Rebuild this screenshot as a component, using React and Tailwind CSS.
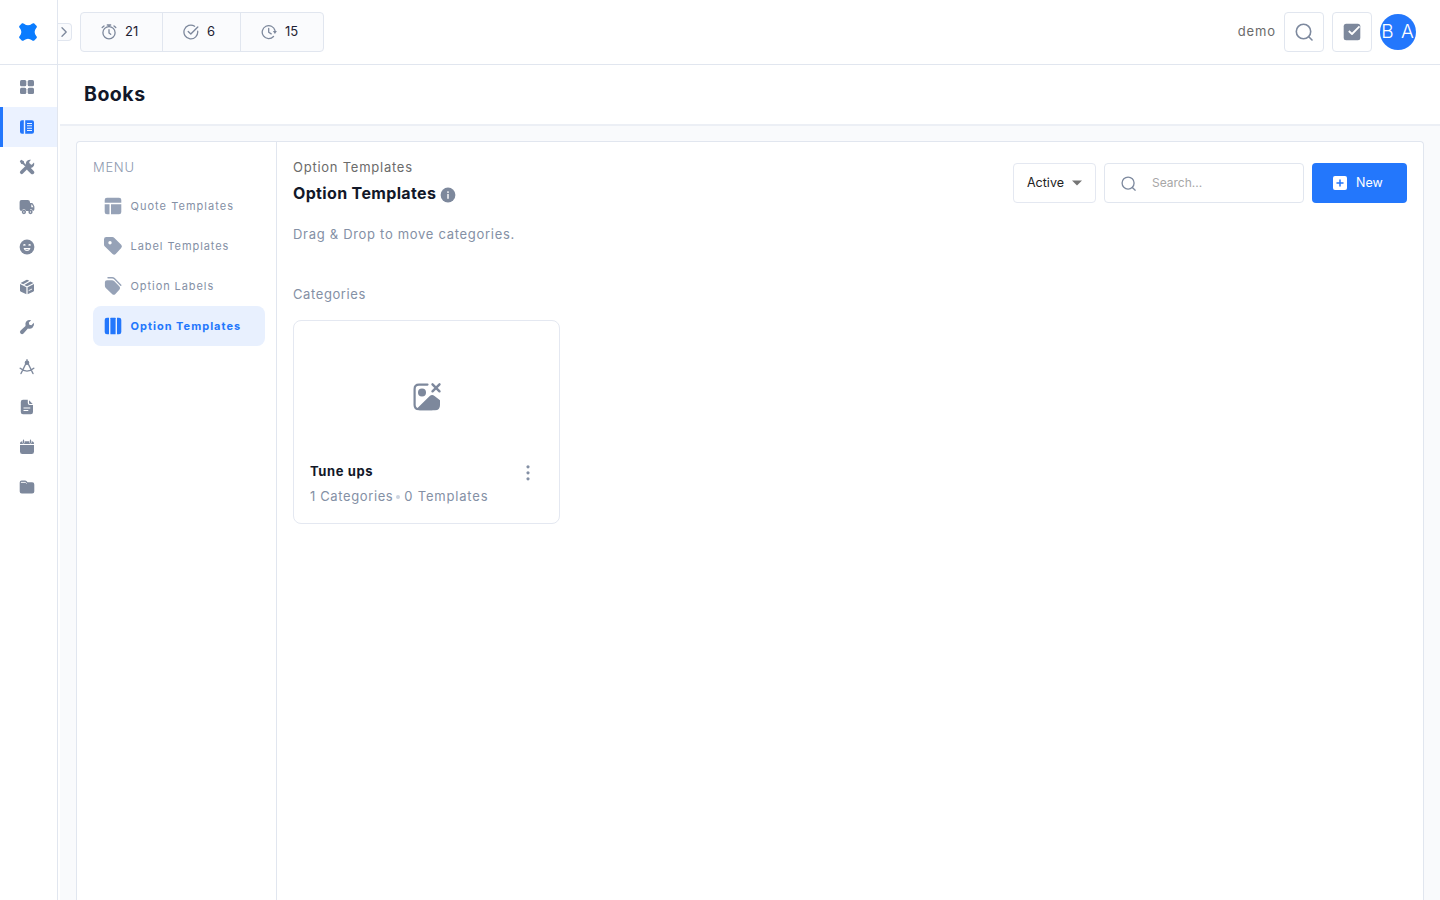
import React from 'react';
import clsx from 'clsx';

const Svg = ({ size = 16, box = 16, className, children }) => (
    <svg width={size} height={size} viewBox={`0 0 ${box} ${box}`} fill="currentColor" className={clsx('shrink-0', className)}>
        {children}
    </svg>
);

const line = { fill: 'none', stroke: 'currentColor', strokeLinecap: 'round', strokeLinejoin: 'round' };

const Logo = () => (
    <Svg size={18} box={18} className="text-[#0a7cff]">
        <path d="M3 0.3 Q4.2 -0.2 5 0.8 Q9 3.9 13 0.8 Q13.8 -0.2 15 0.3 L17.7 3 Q18.2 4.2 17.2 5 Q14.1 9 17.2 13 Q18.2 13.8 17.7 15 L15 17.7 Q13.8 18.2 13 17.2 Q9 14.1 5 17.2 Q4.2 18.2 3 17.7 L0.3 15 Q-0.2 13.8 0.8 13 Q3.9 9 0.8 5 Q-0.2 4.2 0.3 3 Z" />
    </Svg>
);

const DashboardIcon = () => (
    <Svg>
        <rect x="1" y="1" width="6.3" height="6.3" rx="1.5" />
        <rect x="8.7" y="1" width="6.3" height="6.3" rx="1.5" />
        <rect x="1" y="8.7" width="6.3" height="6.3" rx="1.5" />
        <rect x="8.7" y="8.7" width="6.3" height="6.3" rx="1.5" />
    </Svg>
);

const BookIcon = () => (
    <Svg>
        <path d="M4.8 1.3 V14.7 H3 Q1 14.7 1 12.7 V3.3 Q1 1.3 3 1.3 Z" />
        <path fillRule="evenodd" d="M6.2 1.3 H13 Q15 1.3 15 3.3 V12.7 Q15 14.7 13 14.7 H6.2 Z M8 4 V5 H13 V4 Z M8 6.3 V7.3 H13 V6.3 Z M8 8.7 V9.7 H13 V8.7 Z M8 11 V12 H13 V11 Z" />
    </Svg>
);

const ToolsIcon = () => (
    <Svg>
        <path d="M0.8 2.2 L2.2 0.8 L4.9 2.3 L5.2 3.9 L7.6 6.2 L6.2 7.6 L3.9 5.2 L2.3 4.9 Z" />
        <path d="M10 10 L13.3 13.3" {...line} strokeWidth="3.9" />
        <path d="M2.7 13.3 L10 6" {...line} strokeWidth="3.5" />
        <path d="M15 3.6 A4.2 4.2 0 1 1 12 0.8 L10.2 3 L10.6 5.2 L12.8 5.7 Z" />
    </Svg>
);

const TruckIcon = () => (
    <Svg>
        <path d="M2.5 1 H8.7 Q11 1 11 3.3 V12 H7.2 A2.4 2.4 0 0 0 2.6 12 Q0.6 12 0.6 10 V3 Q0.6 1 2.5 1 Z" />
        <path fillRule="evenodd" d="M11 4 H12.8 Q13.6 4 14 4.8 L15.4 7.4 V10.2 Q15.4 12 13.8 12 A2.2 2.2 0 0 0 11 10.5 Z M12.3 5.5 V8.3 H14.4 L13 5.5 Z" />
        <circle cx="4.9" cy="13" r="1.4" {...line} strokeWidth="1.5" />
        <circle cx="11.5" cy="13" r="1.4" {...line} strokeWidth="1.5" />
    </Svg>
);

const SmileIcon = () => (
    <Svg>
        <circle cx="8" cy="8" r="7.4" />
        <path d="M4.8 6 Q5.4 5.3 6 6 M10 6 Q10.6 5.3 11.2 6" {...line} stroke="#fff" strokeWidth="1.3" />
        <path d="M5.2 9.5 Q6 11.4 8 11.4 Q10 11.4 10.8 9.5 Z" {...line} stroke="#fff" strokeWidth="1.1" />
    </Svg>
);

const BoxIcon = () => (
    <Svg>
        <path d="M1 5 L7.4 8.2 V15.3 L2 12.7 Q1 12.2 1 11.2 Z" />
        <path d="M15 5 L8.6 8.2 V15.3 L14 12.7 Q15 12.2 15 11.2 Z" />
        <path d="M7.2 1 Q8 0.5 8.8 1 L10.3 1.8 L4.2 5.2 L1.5 4 Z" />
        <path d="M11.4 2.4 L14.5 4 L8 7.2 L5.3 5.9 Z" />
        <path d="M10 11.5 L12.7 10.2" {...line} stroke="#fff" strokeWidth="0.9" />
    </Svg>
);

const WrenchIcon = () => (
    <Svg>
        <path d="M14.8 3.8 A4.5 4.5 0 0 1 8.9 9.5 L4.5 14.4 A1.9 1.9 0 0 1 1.6 11.5 L6.5 7.1 A4.5 4.5 0 0 1 12.2 1.2 L9.8 3.6 L10.3 5.7 L12.4 6.2 Z" />
    </Svg>
);

const CompassIcon = () => (
    <Svg>
        <circle cx="8" cy="3.7" r="2.3" />
        <path d="M8 0.8 V3 M7.2 4 L2 14.5 M8.8 4 L14 14.5 M1.2 9.3 Q8 15 14.8 9.3" {...line} strokeWidth="1.4" />
    </Svg>
);

const FileIcon = () => (
    <Svg>
        <path fillRule="evenodd" d="M4 0.8 H8.8 V4 Q8.8 6 10.8 6 H14 V13 Q14 15.2 11.8 15.2 H4 Q1.8 15.2 1.8 13 V3 Q1.8 0.8 4 0.8 Z M4.5 8.4 V9.5 H11.3 V8.4 Z M4.5 11 V12.1 H9.3 V11 Z" />
        <path d="M10 1.2 L13.7 4.9 H11 Q10 4.9 10 3.9 Z" />
    </Svg>
);

const CalendarIcon = () => (
    <Svg>
        <path d="M1 5.9 H15 V12.5 Q15 15 12.7 15 H3.3 Q1 15 1 12.5 Z" />
        <path d="M1 5 Q1 2.3 3.3 2.3 H12.7 Q15 2.3 15 5 Z" />
        <path d="M4.5 1.5 V3.6 M11.5 1.5 V3.6" {...line} stroke="#fff" strokeWidth="2.2" />
        <path d="M4.5 1 V3.8 M11.5 1 V3.8" {...line} strokeWidth="1.2" />
    </Svg>
);

const FolderIcon = () => (
    <Svg>
        <path d="M0.7 4.7 V3.4 Q0.7 1.5 2.6 1.5 H6 Q7 1.5 7.7 2.3 L8.5 3.3 H13.2 Q15.3 3.3 15.3 5.4 V12.4 Q15.3 14.5 13.2 14.5 H2.8 Q0.7 14.5 0.7 12.4 Z" />
        <path d="M2.3 3.4 H6.5 L7.3 4.3" {...line} stroke="#fff" strokeWidth="0.9" />
    </Svg>
);

const TimerIcon = () => (
    <Svg>
        <circle cx="8" cy="8.7" r="6.1" {...line} strokeWidth="1.3" />
        <path d="M8 5.7 V9 L9.7 10.3 M6.3 1 H9.7 M8 1 V2.4 M1.2 3.5 L3 1.9 M14.8 3.5 L13 1.9" {...line} strokeWidth="1.3" />
    </Svg>
);

const CheckCircleIcon = () => (
    <Svg>
        <path d="M14.7 7.2 A6.9 6.9 0 1 1 11.6 2.2" {...line} strokeWidth="1.3" />
        <path d="M5.2 7.6 L7.8 10 L14.8 3" {...line} strokeWidth="1.4" />
    </Svg>
);

const ClockIcon = () => (
    <Svg>
        <path d="M14 6.5 A6.5 6.5 0 1 0 12.5 12.5" {...line} strokeWidth="1.3" />
        <path d="M7.7 4.4 V8.3 L10.2 9.9" {...line} strokeWidth="1.3" />
        <path d="M11.9 7 H15.9 L13.9 10 Z" />
    </Svg>
);

const SearchIcon = ({ size }) => (
    <Svg size={size} box={18} className="text-[#7d899e]">
        <circle cx="8.5" cy="8.5" r="7.2" {...line} strokeWidth="1.6" />
        <path d="M14 14 L17 17" {...line} strokeWidth="1.6" />
    </Svg>
);

const LayoutIcon = () => (
    <Svg size={18} box={18}>
        <path d="M0.7 5.7 V3 Q0.7 0.7 3 0.7 H15 Q17.3 0.7 17.3 3 V5.7 Z" />
        <path d="M0.7 7.2 H5.5 V17.3 H3 Q0.7 17.3 0.7 15 Z" />
        <path d="M7 7.2 H17.3 V15 Q17.3 17.3 15 17.3 H7 Z" />
    </Svg>
);

const TagIcon = () => (
    <Svg size={20} box={20}>
        <path fillRule="evenodd" d="M3.3 1 H9.3 Q10.5 1 11.4 1.9 L18.2 8.8 Q19.7 10.4 18.2 12 L12.7 18 Q11.2 19.5 9.6 18 L1.9 10.5 Q1 9.6 1 8.4 V3.3 Q1 1 3.3 1 Z M7 5 A1.7 1.7 0 1 0 7 8.4 A1.7 1.7 0 1 0 7 5 Z" />
    </Svg>
);

const TagsIcon = () => (
    <Svg size={20} box={20}>
        <path d="M4 4.2 H9 Q10.2 4.2 11.1 5.1 L16.5 10.5 Q17.8 12 16.5 13.4 L12.2 18.2 Q10.8 19.5 9.3 18.2 L2.8 12 Q1.9 11.2 1.9 10 V6.2 Q1.9 4.2 4 4.2 Z" />
        <path d="M5 1.7 H9.2 Q10.4 1.7 11.3 2.6 L17.8 9.3" {...line} strokeWidth="1.4" />
    </Svg>
);

const ColumnsIcon = () => (
    <Svg size={18} box={18}>
        <path d="M5 0.7 V17.3 H3 Q0.7 17.3 0.7 15 V3 Q0.7 0.7 3 0.7 Z" />
        <rect x="6.4" y="0.7" width="5.2" height="16.6" rx="0.5" />
        <path d="M13 0.7 H15 Q17.3 0.7 17.3 3 V15 Q17.3 17.3 15 17.3 H13 Z" />
    </Svg>
);

const NoImageIcon = () => (
    <Svg size={30} box={30} className="text-[#7d889c]">
        <path d="M15.5 2.6 H7 Q2.6 2.6 2.6 7 V23 Q2.6 27.2 7 27.2 H20" {...line} strokeWidth="2.2" />
        <circle cx="10" cy="10.5" r="4" />
        <path d="M5 26.5 L17.5 14.3 Q20 12 22.5 14 L28 18.3 V23 Q28 28.3 23 28.3 H7.5 Z" />
        <path d="M20.5 2.3 L27.5 9.3 M27.5 2.3 L20.5 9.3" {...line} strokeWidth="2.4" />
    </Svg>
);

const sideItems = [
    { id: 'dashboard', icon: DashboardIcon },
    { id: 'books', icon: BookIcon },
    { id: 'tools', icon: ToolsIcon },
    { id: 'delivery', icon: TruckIcon },
    { id: 'customers', icon: SmileIcon },
    { id: 'inventory', icon: BoxIcon },
    { id: 'service', icon: WrenchIcon },
    { id: 'design', icon: CompassIcon },
    { id: 'documents', icon: FileIcon },
    { id: 'calendar', icon: CalendarIcon },
    { id: 'files', icon: FolderIcon },
];

const menuItems = [
    { label: 'Quote Templates', icon: LayoutIcon, tracking: 'tracking-[1.03px]' },
    { label: 'Label Templates', icon: TagIcon, tracking: 'tracking-[0.93px]' },
    { label: 'Option Labels', icon: TagsIcon, tracking: 'tracking-[0.93px]' },
    { label: 'Option Templates', icon: ColumnsIcon, tracking: 'tracking-[1px]' },
];

const Sidebar = () => (
    <aside className="flex h-full w-[58px] shrink-0 flex-col border-r border-[#e1e6ef] bg-white">
        <div className="flex h-[65px] shrink-0 items-center justify-center border-b border-[#e1e6ef] pr-px">
            <Logo />
        </div>
        <nav className="flex flex-col pt-[1.5px] text-[#7d889c]">
            {sideItems.map(({ id, icon: Icon }) => (
                <button
                    key={id}
                    className={clsx(
                        'flex h-10 items-center border-l-[3px] pl-4',
                        id === 'books' ? 'border-[#2377fc] bg-[#ebf2ff] text-[#2377fc]' : 'border-transparent'
                    )}
                >
                    <Icon />
                </button>
            ))}
        </nav>
    </aside>
);

const Header = () => (
    <header className="flex h-[65px] shrink-0 items-center border-b border-[#e1e6ef] bg-white">
        <button className="flex h-[18px] w-[14px] items-center justify-center rounded-r border border-l-0 border-[#e1e6ef] bg-[#fafbfd] pr-px text-[#7d889c]">
            <Svg size={10} box={10}>
                <path d="M3 0.8 L7.2 5 L3 9.2" {...line} strokeWidth="1.3" />
            </Svg>
        </button>
        <div className="ml-2 flex h-10 w-[244px] rounded border border-[#e1e6ef] bg-[#fafbfd] text-[13px] text-[#1c2233]">
            <div className="flex w-[82px] items-center gap-2 border-r border-[#e1e6ef] pl-5">
                <span className="text-[#7d889c]"><TimerIcon /></span>21
            </div>
            <div className="flex w-[78px] items-center gap-2 border-r border-[#e1e6ef] pl-5">
                <span className="text-[#7d889c]"><CheckCircleIcon /></span>6
            </div>
            <div className="flex flex-1 items-center gap-2 pl-5">
                <span className="text-[#7d889c]"><ClockIcon /></span>15
            </div>
        </div>
        <div className="ml-auto flex items-center gap-2 pr-6">
            <span className="text-[13px] tracking-[0.9px] text-[#6b6b6b]">demo</span>
            <button className="flex size-10 items-center justify-center rounded border border-[#e1e6ef]">
                <SearchIcon size={18} />
            </button>
            <button className="flex size-10 items-center justify-center rounded border border-[#e1e6ef] text-[#7d889c]">
                <Svg size={18} box={18}>
                    <rect x="0.7" y="0.7" width="16.6" height="16.6" rx="2.5" />
                    <path d="M5.8 8 L9 11 L16.5 3.3" {...line} stroke="#fff" strokeWidth="1.8" strokeLinecap="butt" />
                </Svg>
            </button>
            <div className="flex size-9 items-center justify-center overflow-hidden rounded-full bg-[#2377fc] text-[19px] font-light tracking-[1px] whitespace-nowrap text-white">
                B A
            </div>
        </div>
    </header>
);

const SideMenu = () => (
    <div className="w-[200px] shrink-0 border-r border-[#e1e6ef] pt-[15px] pl-4">
        <div className="h-5 text-[13px] leading-5 font-light tracking-[0.7px] text-[#8d99af]">MENU</div>
        <div className="mt-[9px] flex w-[172px] flex-col">
            {menuItems.map(({ label, icon: Icon, tracking }) => {
                const isActive = label === 'Option Templates';
                return (
                    <button
                        key={label}
                        className={clsx(
                            'flex h-10 items-center rounded-lg pl-[9.5px] text-[11px]',
                            tracking,
                            isActive ? 'bg-[#e8f0fe] font-bold text-[#2377fc]' : 'text-[#8490a5]'
                        )}
                    >
                        <span className={clsx('mr-2 flex w-5 justify-center', !isActive && 'text-[#96a2b7]')}><Icon /></span>
                        {label}
                    </button>
                );
            })}
        </div>
    </div>
);

const CategoryCard = () => (
    <div className="mt-4 h-[204px] w-[267px] rounded-lg border border-[#e4e8f1] px-4">
        <div className="flex h-[138px] items-center justify-center pt-[14px]">
            <NoImageIcon />
        </div>
        <div className="flex items-center justify-between pr-[6.5px]">
            <h3 className="h-6 text-[13px] leading-6 font-bold tracking-[0.6px] text-[#121829]">Tune ups</h3>
            <Svg size={18} box={18} className="mt-1 text-[#8490a5]">
                <circle cx="9" cy="2.8" r="1.6" />
                <circle cx="9" cy="8.8" r="1.6" />
                <circle cx="9" cy="14.8" r="1.6" />
            </Svg>
        </div>
        <p className="mt-[2px] flex h-6 items-center text-[13px] tracking-[0.62px] text-[#8490a5]">
            1 Categories
            <span className="mr-1 ml-[3px] size-1 rounded-full bg-[#cdd4e0]" />
            <span className="tracking-[0.8px]">0 Templates</span>
        </p>
    </div>
);

const Toolbar = () => (
    <div className="flex gap-2 pt-[6px]">
        <button className="flex h-10 w-[83px] items-center justify-between rounded border border-[#e4e8f1] px-[13px] text-[12.5px] text-[#222]">
            Active
            <Svg size={10} box={10} className="text-[#757575]">
                <path d="M0 2.5 H10 L5 7.5 Z" />
            </Svg>
        </button>
        <label className="flex h-10 w-[200px] items-center gap-4 rounded border border-[#e1e6ef] pl-4 text-[12px]">
            <SearchIcon size={15} />
            <span className="text-[#a7a7a7]">Search...</span>
        </label>
        <button className="flex h-10 w-[95px] items-center gap-2 rounded bg-[#2377fc] pl-5 text-[12.5px] text-white">
            <Svg>
                <rect x="1" y="1" width="14" height="14" rx="2" />
                <path d="M8 5 V11 M5 8 H11" {...line} stroke="#2377fc" strokeWidth="1.5" />
            </Svg>
            New
        </button>
    </div>
);

export default function App() {
    return (
        <div className="flex h-[900px] w-[1440px] overflow-hidden bg-white font-['Inter',sans-serif]">
            <Sidebar />
            <div className="flex min-w-0 flex-1 flex-col">
                <Header />
                <div className="flex min-h-0 flex-1 flex-col pl-[2px]">
                    <div className="flex h-[61px] shrink-0 items-center border-b-2 border-[#eceff5] bg-white pl-6">
                        <h1 className="text-[19.5px] font-bold tracking-[0.5px] text-[#121829]">Books</h1>
                    </div>
                    <main className="flex min-h-0 flex-1 bg-[#f9fafc] px-4 pt-[15px]">
                        <div className="flex flex-1 rounded-t border border-b-0 border-[#e1e6ef] bg-white">
                            <SideMenu />
                            <section className="flex-1 px-4 pt-[15px]">
                                <div className="flex justify-between">
                                    <div>
                                        <div className="text-[13px] leading-5 tracking-[0.75px] text-[#6b6b6b]">Option Templates</div>
                                        <div className="mt-[2px] mb-[2px] flex h-7 items-center gap-1">
                                            <h2 className="text-base font-bold tracking-[0.35px] text-[#121829]">Option Templates</h2>
                                            <Svg className="mt-[3px] text-[#7d889c]">
                                                <circle cx="8" cy="8" r="7.4" />
                                                <path d="M8 7.5 V11.2" {...line} stroke="#fff" strokeWidth="1.4" />
                                                <circle cx="8" cy="5.1" r="0.9" fill="#fff" />
                                            </Svg>
                                        </div>
                                    </div>
                                    <Toolbar />
                                </div>
                                <p className="mt-[15px] text-[13px] leading-5 tracking-[0.7px] text-[#8490a5]">Drag &amp; Drop to move categories.</p>
                                <h4 className="mt-10 text-[13px] leading-5 tracking-[0.6px] text-[#8490a5]">Categories</h4>
                                <CategoryCard />
                            </section>
                        </div>
                    </main>
                </div>
            </div>
        </div>
    );
}
